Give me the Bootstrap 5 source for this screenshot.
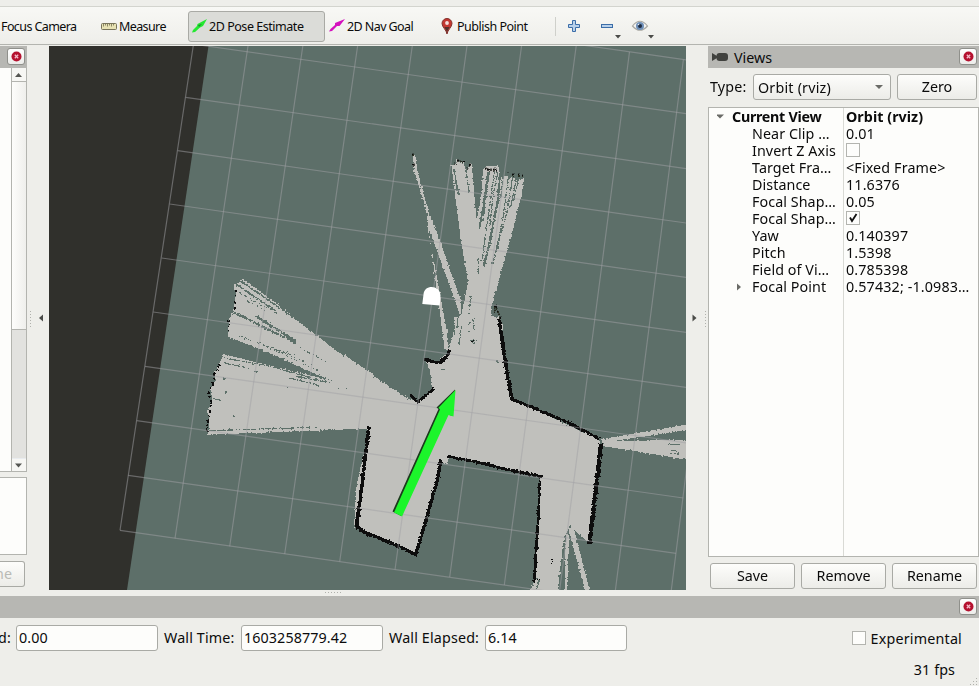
<!DOCTYPE html>
<html lang="en">
<head>
<meta charset="utf-8">
<title>RViz</title>
<link href="https://cdn.jsdelivr.net/npm/bootstrap@5.3.0/dist/css/bootstrap.min.css" rel="stylesheet">
<style>
  body{width:979px;height:686px;overflow:hidden;background:#eeeeea;color:#0b0b0b;font:14.3px/17px "Noto Sans","Open Sans",sans-serif}
  svg{display:block;flex:none}
  .strip{height:7px;border-bottom:1px solid #d3d4ce}
  .tools{height:38px;border-bottom:1px solid #b3b4af;background:linear-gradient(#f8f8f5,#eeeeea);font-size:12.5px}
  .tool{height:31px;padding-bottom:1px;white-space:nowrap}
  .tool svg{margin-right:2px}
  .t1{width:100px;padding-left:1px;letter-spacing:-.6px}
  .t2{width:88px;padding-left:1px;letter-spacing:-.6px}
  .t3{width:137px;padding-left:3px;letter-spacing:-.46px;background:#dbdcd8;border:1px solid #a9aaa5;border-radius:3px}
  .t4{width:115px;padding-left:4px;letter-spacing:-.58px}
  .t5{width:115px;padding-left:1px;letter-spacing:-.5px}
  .t6{width:100px}
  .main{height:544px;margin-top:1px}
  .leftdock{width:27px}
  .bar{height:22px;background:#b7b7b3;flex:none}
  .xbtn{width:18px;height:17px;border:1px solid #8f908b;border-radius:3px;background:linear-gradient(#fff,#ecece9)}
  .leftdock .bar{padding:2px 2px 0 0}
  .rightdock .bar{padding-right:2px}
  .rightdock .xbtn{margin-bottom:1px}
  .vtitle{padding-left:6px}
  .lowbar{padding:2px 2px 0 0}
  .pane{background:#fdfdfb;border:1px solid #b3b4af}
  .lscroll{height:404px;border-left:0;border-top:0}
  .sb{width:15px;border-left:1px solid #b3b4af;background:#e2e2df}
  .sb .cap{height:13px;background:#f7f7f4}
  .sb .thumb{height:249px;background:linear-gradient(90deg,#fdfdfb,#efefec);border-top:1px solid #b3b4af;border-bottom:1px solid #b3b4af}
  .desc{height:78px;margin-top:5px;border-left:0}
  .btnq{height:26px;border:1px solid #a9aaa5;border-radius:3px;background:linear-gradient(#fdfdfb,#ecece8);color:inherit;font-size:14.3px;line-height:23px}
  .btnoff{width:25px;margin-top:6px;border-left:0;border-radius:0 3px 3px 0;color:#b9bab5;direction:rtl;padding-right:12px;white-space:nowrap;overflow:hidden}
  .gut{width:22px}
  .rightdock{width:271px}
  .typ{margin-top:6px}
  .typl{width:45px;padding-left:2px;letter-spacing:.15px;line-height:25px}
  .combo{width:138px;letter-spacing:.2px}
  .zero{width:80px;margin-left:6px}
  .tree{height:450px;margin-top:7px}
  .names,.vals{padding-top:1px}
  .names{width:135px;border-right:1px solid #d9dad5}
  .names div,.vals div{height:17px;line-height:16px;white-space:nowrap}
  .names div{padding-left:43px;letter-spacing:.07px}
  .vals div{padding-left:2px;letter-spacing:.14px}
  .names .top,.vals .top{font-weight:700;letter-spacing:-.28px;line-height:15px}
  .names .top{padding:0 0 2px 8px}
  .vals .top{letter-spacing:.05px}
  .names .sub{padding:0 0 2px 24px}
  .chk{display:block;width:14px;height:14px;border:1px solid #b3b4af;background:#fdfdfb}
  .btnrow{padding:6px 2px 0 2px;gap:6px}
  .btnrow .btnq{width:85px}
  .hsplit{height:6px}
  .field{width:142px;height:26px;border:1px solid #a9aaa5;border-radius:3px;background:#fdfdfb;padding-left:2px;line-height:23px;letter-spacing:.1px}
  .timerow{height:26px;margin-top:7px;white-space:nowrap}
  .lbl{letter-spacing:.15px;line-height:26px}
  .l0{width:16px;text-indent:-2px}
  .l1{width:83px;padding-left:6px}
  .l2{width:102px;padding-left:6px}
  .exp{letter-spacing:.2px;margin:0 1px 0 1px}
  .fps{padding:10px 24px 0 0;letter-spacing:.1px}
</style>
<script src="https://cdn.jsdelivr.net/npm/bootstrap@5.3.0/dist/js/bootstrap.bundle.min.js"></script>
</head>
<body>
<svg width="0" height="0" class="position-absolute">
  <defs>
    <g id="close"><circle cx="5.5" cy="5.5" r="5" fill="#b5112f"/><path d="M3.800 3.800l3.400 3.400M7.200 3.800L3.800 7.200" stroke="#f3b9c8" stroke-width="1.300"/></g>
  </defs>
</svg>
<div class="strip"></div>
<div class="tools d-flex align-items-start pt-1">
  <div class="tool t1 d-flex align-items-center">Focus Camera</div>
  <div class="tool t2 d-flex align-items-center">
    <svg width="16" height="7" viewBox="0 0 16 7"><rect x=".5" y=".5" width="15" height="6" rx="1" fill="#e7e2b4" stroke="#77735a"/><path d="M2.500 1v2.500M4.500 1v1.500M6.500 1v2.500M8.500 1v1.500M10.500 1v2.500M12.500 1v1.500" stroke="#8b8765"/></svg><span>Measure</span>
  </div>
  <div class="tool t3 d-flex align-items-center">
    <svg width="15" height="15" viewBox="0 0 15 15"><path d="M0 13.500L1 11 5 7l.5-2L15 0 11 7 8 8.500 3 13z" fill="#25e832"/><path d="M6 6l4-1-3 3z" fill="#18922a"/></svg><span>2D Pose Estimate</span>
  </div>
  <div class="tool t4 d-flex align-items-center">
    <svg width="16" height="14" viewBox="0 0 16 14"><path d="M0 12.500L1.500 10 6 6V4L16 0 10.500 7H8L3 12z" fill="#d411bd"/></svg><span>2D Nav Goal</span>
  </div>
  <div class="tool t5 d-flex align-items-center">
    <svg width="12" height="17" viewBox="0 0 12 17" class="me-1"><path d="M6 16C5.500 12 1 9 1 5.500a5 5 0 0 1 10 0C11 9 6.500 12 6 16z" fill="#c43731" stroke="#83332d"/><path d="M6 16c0-4-2-5-2.500-7h5C8 11 6 12 6 16" fill="#54302b"/><circle cx="6" cy="5" r="1.900" fill="#f3dfdc"/></svg><span>Publish Point</span>
  </div>
  <div class="tool t6 d-flex align-items-start">
    <svg width="100" height="30" viewBox="555 11 100 30">
      <path d="M555 17v19" stroke="#cfd0cb" stroke-width="2"/>
      <path d="M572.500 20.500h3v4h4v3h-4v4h-3v-4h-4v-3h4z" fill="#b8d0ea" stroke="#3b6da8"/>
      <rect x="601.500" y="24.500" width="11" height="3" fill="#b8d0ea" stroke="#3b6da8"/>
      <path d="M615 35h6l-3 3.500zM648 35h6l-3 3.500z" fill="#4a4b48"/>
      <path d="M632.500 26q7.500-9.500 15 0-7.500 8.500-15 0z" fill="#f4f4f2" stroke="#aaa9a3" stroke-width="1.200"/>
      <circle cx="640" cy="26" r="4" fill="#6e8fb8"/><circle cx="640" cy="26" r="2" fill="#1e2b40"/><circle cx="638.500" cy="24.500" r=".8" fill="#e8f0fa"/>
    </svg>
  </div>
</div>

<div class="main d-flex">
  <div class="leftdock d-flex flex-column">
    <div class="bar d-flex justify-content-end"><div class="xbtn d-flex align-items-center justify-content-center"><svg width="11" height="11"><use href="#close"/></svg></div></div>
    <div class="pane lscroll d-flex justify-content-end">
      <div class="sb d-flex flex-column">
        <div class="cap"><svg width="13" height="13"><path d="M3 9h7L6.500 5z" fill="#555652"/></svg></div>
        <div class="thumb"></div>
        <div class="flex-grow-1"></div>
        <div class="cap border-top border-secondary-subtle"><svg width="13" height="13"><path d="M3 4.500h7L6.500 8.500z" fill="#555652"/></svg></div>
      </div>
    </div>
    <div class="pane desc"></div>
    <div class="btnq btnoff">ne</div>
  </div>
  <svg class="gut" height="544" viewBox="27 46 22 544"><path d="M43 314.500v7l-4-3.500z" fill="#4a4b48"/><path d="M30.500 311v17" stroke="#b0b1ac" stroke-dasharray="1 2"/></svg>

  <svg width="637" height="544" viewBox="49 46 637 544">
    <defs>
      <filter id="rough" x="-10%" y="-10%" width="120%" height="120%"><feTurbulence type="fractalNoise" baseFrequency=".55" numOctaves="1" seed="4"/><feDisplacementMap in="SourceGraphic" scale="3.600" xChannelSelector="R" yChannelSelector="G"/></filter>
    </defs>
    <rect x="49" y="46" width="637" height="544" fill="#30302c"/>
    <path d="M208.500 46H686V590H127z" fill="#5d6f69"/>
    <g filter="url(#rough)" shape-rendering="crispEdges">
      <!-- free space: upper beams -->
      <g transform="translate(366 46) scale(.33333)" fill="#c0c0bc">
        <path d="M140 330l8 0 6 42 24 90 12 40 28 70 66 190v50l-18-50-50-140-34-90 60 320 6 60h-12l-6-50L180 490 142 365z"/>
        <path d="M256 355l12 0 4-15 10 10 12 0 4 22 8-5 6-16 5 1 6 68 9 105 16-85 3-70 10-10h36l2 15 10 25 8-12 10 7h14l12 10 5-7 16 0-6 45-28 110-65 235-2 50 18 10 20-15v55H276l10-80 20-100-22-130z"/>
      </g>
      <!-- free space: left beams -->
      <g transform="translate(49 46) scale(.33333)" fill="#c0c0bc">
        <path d="M583 699L735 812 920 951 975 985V1050L880 1016 800 985 660 920 536 872 540 820 552 800 556 770 562 740 553 720z"/>
      </g>
      <g transform="translate(49 318) scale(.33333)" fill="#c0c0bc">
        <path d="M522 108L880 196 960 155V332L478 350 480 300 474 280 490 240 484 215 500 185 496 165 510 140z"/>
      </g>
      <!-- free space: room interior and lower beams -->
      <g transform="translate(366 318) scale(.33333)" fill="#c0c0bc">
        <path d="M265-4H398L408 65 418 130 437 242 700 366 706 385 692 530 670 678 612 622 600 650 590 700 575 820H490L505 790 520 490 525 478 245 415 245 440 224 430 210 485 180 610 148 712 0 648-36 628-28 500-5 400 5 330-12 332V152L0 160 128 243 152 250 200 212 190 150 176 125 215 132 245 100 262 50z"/>
        <path d="M706 364L960 320v17L735 370l225-5v60L712 384z"/>
        <path d="M597 650h12l-4 170h-8zM615 620l10 18 46 180h-14L610 640z"/>
      </g>
      <!-- unknown slits between the beams -->
      <g transform="translate(366 46) scale(.33333)" fill="none" stroke="#5d6f69" stroke-width="3.500">
        <path d="M262 365l18 85M300 370l10 75M268 400l7 45M370 378l-20 150M386 376l-30 210-8 60" stroke-dasharray="35 4 8 3"/>
        <path d="M366 378l-10 80-16 90" stroke-width="6"/><path d="M402 380l-6 80-27 140-16 60" stroke-width="7"/>
        <path d="M396 378l-14 65-11 100M412 386l-8 70M428 390l-20 145-28 120M440 392l-18 110-40 145M452 395l-18 90M458 395l-16 75" stroke-dasharray="30 3 10 5"/>
        <path d="M316 745l-8 60M336 635l2 55" stroke-dasharray="24 5"/>
      </g>
      <g transform="translate(49 46) scale(.33333)" fill="none" stroke="#5d6f69" stroke-width="5">
        <path d="M574 705L760 832 885 928M562 715L680 795"/><path d="M556 800L690 866 740 892M620 810l120 76" stroke-width="7" stroke-dasharray="60 3 22 4"/>
        <path d="M570 740l120 66" stroke-dasharray="12 5" stroke-width="3"/>
        <path d="M595 765l70 38M690 850l50 30M750 905l95 48M570 870l150 55M660 905l150 70M630 890l160 68M700 935l150 78M640 895l100 35" stroke-width="3" stroke-dasharray="8 9 4 7"/>
      </g>
      <g transform="translate(49 318) scale(.33333)" fill="none" stroke="#5d6f69" stroke-width="3.500">
        <path d="M525 120l140 25 170 48M525 134l75 17M720 180l90 22M740 175l90 18" stroke-dasharray="50 4 15 5"/>
        <path d="M480 338l320-10" stroke-dasharray="50 4 30 3 10 6"/><path d="M485 240l30 6M522 296h5M552 296h6M528 222h6M715 208h5M525 178v8M615 160h8M866 210h5M888 212h5"/>
      </g>
      <g transform="translate(366 318) scale(.33333)" fill="none" stroke="#5d6f69" stroke-width="3">
        <path d="M286 25l-6 55M275 0v30M308 20l15-18v35M310 68h25M225 156h12M390 130h7M318 40h-9M315 75l16-3M905 380h40M908 395l35 6M910 408h30"/>
        <path d="M262 0l4 55M505 775l15 12-10 28" stroke-width="5"/><path d="M598 650l-20 168" stroke-width="6"/>
        <path d="M612 655l-6 165" stroke-width="5"/>
      </g>
      <!-- obstacles -->
      <g transform="translate(366 318) scale(.33333)" fill="none" stroke="#0d0d0a" stroke-width="9">
        <path d="M399 2l10 65 8 60 20 115" stroke-width="11"/><path d="M433 242l56 22 116 49 96 50"/>
        <path d="M705 378l-7 60-16 145-12 95" stroke-width="13"/>
        <path d="M245 415l110 22 70 18 105 22"/><path d="M522 488l-5 110-13 195" stroke-width="8"/>
        <path d="M224 425l-10 60-25 90-40 135-45-23-104-43" stroke-width="10"/>
        <path d="M174 123l36 10h14l18-18 8-20M134 232l20 20 50-40M178 125l10 6"/>
        <path d="M559 722v14M314 71h10M512 785h12" stroke-width="4"/>
      </g>
      <g transform="translate(49 318) scale(.33333)" fill="none" stroke="#0d0d0a">
        <path d="M960 325l-10 80-14 120-14 100 42 30" stroke-width="11"/>
        <path d="M512 138l-16 30-4 32-14 26 8 20-5 48-8 30 4 22" stroke-width="6" stroke-dasharray="12 5 5 7"/><path d="M540 5v45" stroke-width="3" stroke-dasharray="6 9"/>
      </g>
      <g transform="translate(366 46) scale(.33333)" fill="none" stroke="#0d0d0a" stroke-width="5">
        <path d="M142 324v8M145 352v6M260 355h12M272 345h10l10 3h4M302 370h8M312 352v8M356 366l10 6h12l14-3v8M424 382h8M438 386h8M460 384v8M470 386v8" stroke-dasharray="6 3"/>
        <path d="M384 780l12 15 6 20M390 780l-5 20" stroke-dasharray="5 4"/>
      </g>
      <path d="M236 290v6M235 302v7" stroke="#0d0d0a" stroke-width="1.500" stroke-dasharray="2 3"/>
    </g>
    <g fill="none" stroke="#a2a2a6" stroke-opacity=".5" stroke-width="1.200">
      <path d="M120 530.300L669 608.500M128.300 475.300L676 553.300M136.700 420.700L683.300 498M145 366.300L690.500 443.500M153.300 312L697 389M161.700 258L704 335M169.700 204L711 281M177.700 150.700L717.500 227.500M185.700 97.300L724 174M193.700 44.200L730.500 120M201.500-8.800L737 67"/>
      <path d="M120 530.300L201.500-8.800M175 538.300L255-1.200M229.700 546.300L308.600 6.400M284.700 554L362.200 14M339.700 561.700L415.700 21.600M395 569.700L469.300 29.200M449.700 577L522.800 36.800M504.300 585L576.400 44.400M559.300 593L629.500 51.900M614 601L683.400 59.500M669 608.500L737 67"/>
    </g>
    <path d="M422.300 304l1.200-9.500c.5-10 16.500-10 17 1l-.8 10z" fill="#fff"/>
    <g stroke-linejoin="round"><path d="M392.500 511.500L438.500 409 436.500 407.500 455 389.500 452.500 416 448 414.500 401 516z" fill="#1b3a1c"/><path d="M394 512.500L440 409.500 438.500 407.800 455.500 390 453.500 416.500 448.500 415 402 516.500z" fill="#1cf52b"/></g>
  </svg>

  <svg class="gut" height="544" viewBox="686 46 22 544"><path d="M692.500 314.500v7l4-3.500z" fill="#4a4b48"/><path d="M705.500 311v17" stroke="#b0b1ac" stroke-dasharray="1 2"/></svg>

  <div class="rightdock d-flex flex-column">
    <div class="bar d-flex align-items-center">
      <svg width="16" height="8" class="ms-1" viewBox="0 0 16 8"><rect x="4.500" width="11.500" height="8" rx="3" fill="#40413e"/><path d="M0 0l5 3v2L0 8z" fill="#40413e"/></svg>
      <span class="flex-grow-1 vtitle">Views</span>
      <div class="xbtn d-flex align-items-center justify-content-center"><svg width="11" height="11"><use href="#close"/></svg></div>
    </div>
    <div class="d-flex typ">
      <span class="typl">Type:</span>
      <div class="btnq combo d-flex align-items-center ps-1"><span class="flex-grow-1">Orbit (rviz)</span><svg width="18" height="8"><path d="M3 2h8L7 6z" fill="#6a6b67"/></svg></div>
      <div class="btnq text-center zero">Zero</div>
    </div>
    <div class="pane tree d-flex">
      <div class="names">
        <div class="top d-flex align-items-center"><svg width="15" height="8"><path d="M-1 1.500h8L3 5.500z" fill="#6a6b67"/></svg>Current View</div>
        <div>Near Clip …</div><div>Invert Z Axis</div><div>Target Fra…</div><div>Distance</div><div>Focal Shap…</div><div>Focal Shap…</div><div>Yaw</div><div>Pitch</div><div>Field of Vi…</div>
        <div class="sub d-flex align-items-center"><svg width="19" height="10"><path d="M4 1.500v7L8 5z" fill="#6a6b67"/></svg>Focal Point</div>
      </div>
      <div class="vals">
        <div class="top">Orbit (rviz)</div>
        <div>0.01</div><div><span class="chk"></span></div><div>&lt;Fixed Frame&gt;</div><div>11.6376</div><div>0.05</div>
        <div><span class="chk"><svg width="12" height="12"><path d="M3 5.500L5 9 9.500 2" fill="none" stroke="#111" stroke-width="1.800"/></svg></span></div>
        <div>0.140397</div><div>1.5398</div><div>0.785398</div><div>0.57432; -1.0983…</div>
      </div>
    </div>
    <div class="btnrow d-flex"><div class="btnq text-center">Save</div><div class="btnq text-center">Remove</div><div class="btnq text-center">Rename</div></div>
  </div>
</div>

<svg class="hsplit w-100" height="6" viewBox="0 0 979 6"><path d="M325 2.500h17" stroke="#b0b1ac" stroke-dasharray="1 2"/></svg>
<div class="bar lowbar d-flex justify-content-end"><div class="xbtn d-flex align-items-center justify-content-center"><svg width="11" height="11"><use href="#close"/></svg></div></div>
<div class="timerow d-flex">
  <div class="lbl l0">d:</div><div class="field">0.00</div>
  <div class="lbl l1">Wall Time:</div><div class="field">1603258779.42</div>
  <div class="lbl l2">Wall Elapsed:</div><div class="field">6.14</div>
  <div class="ms-auto d-flex align-items-center pe-3"><span class="chk me-1"></span><span class="exp">Experimental</span></div>
</div>
<div class="d-flex justify-content-end fps">31 fps</div>
<svg class="ms-auto" width="12" height="12" viewBox="0 0 12 12"><path d="M9.500 0v12M6.500 3v9M3.500 6v6M.5 9v3" stroke="#b0b1ac" stroke-dasharray="1 2"/></svg>
</body>
</html>
